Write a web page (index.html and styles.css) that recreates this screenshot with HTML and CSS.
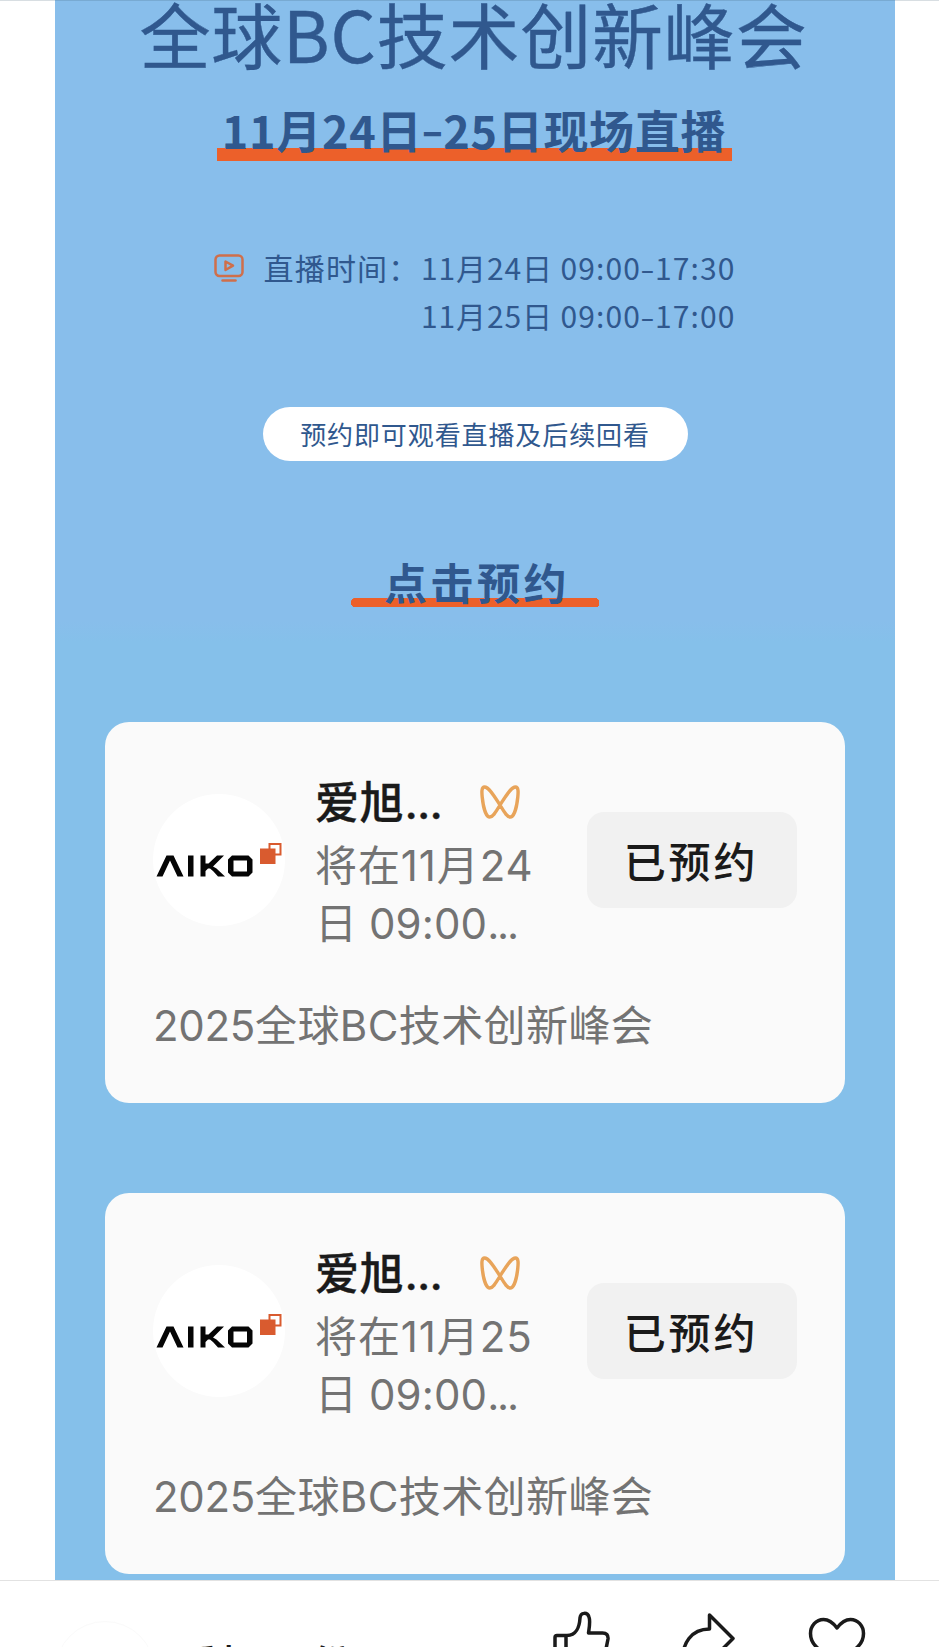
FILE: index.html
```html
<!DOCTYPE html>
<html lang="zh-CN">
<head>
<meta charset="utf-8">
<title>全球BC技术创新峰会</title>
<link rel="stylesheet" href="styles.css">
</head>
<body>
<svg class="defs" width="0" height="0" aria-hidden="true">
  <symbol id="aiko" viewBox="0 0 132 132">
    <g fill="#050505">
      <path d="M3.500 82.500 13.500 61.500H20.500L30.500 82.500H24.500L17 66.500 9.500 82.500Z"/>
      <path d="M35 61.500H40.500V82.500H35Z"/>
      <path d="M47.500 61.500H52.500V69.500H55.500L64 61.500H71L60 72.500 63.500 74.500 72 82.500H65L60 77 57 74.500H55L52.500 77V82.500H47.500Z"/>
      <path fill-rule="evenodd" d="M79 61.500H95.500L99.500 65.500V78.500L95.500 82.500H79L75 78.500V65.500ZM80.500 66.500V77.500H94V66.500Z"/>
    </g>
    <path d="M116.500 50H127.500V60.500H116.500Z" fill="#fff" stroke="#d95b2f" stroke-width="2"/>
    <path d="M107 54.500H122.500V70H107Z" fill="#d95b2f"/>
  </symbol>
  <symbol id="channels" viewBox="0 0 40 34">
    <path d="M20 20C14.500 11.500 9 2 4.500 2C1.500 2 1.700 7 2.200 12C3 20 5.500 32 9.800 32C13 32 15.500 27.500 20 20C25.500 11.500 31 2 35.500 2C38.500 2 38.300 7 37.800 12C37 20 34.500 32 30.200 32C27 32 24.500 27.500 20 20Z" fill="none" stroke="#e8a45a" stroke-width="3.400" stroke-linejoin="round"/>
  </symbol>
</svg>
<div class="screen">
  <main class="poster">
    <h1 class="headline">全球BC技术创新峰会</h1>
    <div class="dates"><span>11月24日<i>–</i>25日现场直播</span></div>
    <section class="schedule">
      <svg class="tv" viewBox="0 0 30 29" fill="none" stroke="#cf6f4b" stroke-width="2.500" stroke-linejoin="round" stroke-linecap="round">
        <rect x="1.500" y="1.500" width="27" height="20.500" rx="4"/>
        <path d="M11.500 7.500V16L19 11.700Z"/><path d="M8.500 26.500H21.500"/>
      </svg>
      <span class="label">直播时间：</span>
      <div class="times"><span>11月24日 <b>09:00<i>–</i>17:30</b></span><span>11月25日 <b>09:00<i>–</i>17:00</b></span></div>
    </section>
    <div class="pill">预约即可观看直播及后续回看</div>
    <h2 class="reserve"><span>点击预约</span></h2>

    <article class="card">
      <div class="row">
        <svg class="avatar"><use href="#aiko"/></svg>
        <div class="info">
          <div class="name"><span>爱旭<i>...</i></span><svg class="channels"><use href="#channels"/></svg></div>
          <div class="desc">将在11月24<br><span class="second">日 09:00<i>...</i></span></div>
        </div>
        <button class="btn">已预约</button>
      </div>
      <div class="event"><b>2025</b>全球BC技术创新峰会</div>
    </article>

    <article class="card">
      <div class="row">
        <svg class="avatar"><use href="#aiko"/></svg>
        <div class="info">
          <div class="name"><span>爱旭<i>...</i></span><svg class="channels"><use href="#channels"/></svg></div>
          <div class="desc">将在11月25<br><span class="second">日 09:00<i>...</i></span></div>
        </div>
        <button class="btn">已预约</button>
      </div>
      <div class="event"><b>2025</b>全球BC技术创新峰会</div>
    </article>
  </main>
  <footer class="bar">
    <div class="account"><span class="ring"></span><span class="who">爱旭股份</span></div>
    <div class="actions">
      <svg viewBox="0 0 60 60"><path d="M16 24.500H6Q4 24.500 4 26.500V50Q4 52 6 52H48Q52 52 53 48L57 28Q57.500 22 51.500 22H37.500C38.500 15 39.500 10 38 6C36.500 1 29.500 1 29 7C28.500 16 25 24.500 16 24.500ZM15 24.500V52"/></svg>
      <svg viewBox="0 0 60 60"><path d="M30.500 4 54 27.500 30.500 51V39C20 38 12 41 4 49C3 33 12 18 30.500 18Z"/></svg>
      <svg viewBox="0 0 60 60"><path d="M30 17C25.500 11 21.500 8.500 16.500 8.500C9 8.500 3.500 15 3.500 22.500C3.500 28 5 31.500 9 35.500L30 56L51 35.500C55 31.500 56.500 28 56.500 22.500C56.500 15 51 8.500 43.500 8.500C38.500 8.500 34.500 11 30 17Z"/></svg>
    </div>
  </footer>
</div>
</body>
</html>
```
FILE: styles.css
```css
* { box-sizing: border-box; }
html, body { margin: 0; height: 100%; overflow: hidden; background: #fff; }
body { font-family: "Noto Sans CJK SC", sans-serif; }
i { font-style: normal; }
.defs { position: absolute; }
.screen { height: 1647px; overflow: hidden; display: flex; flex-direction: column; border-top: 1px solid rgba(60, 90, 110, .2); background: linear-gradient(#88beeb, #88beeb) 55px 0 / 840px 1px no-repeat border-box, #fff; }
.poster { flex: none; width: 840px; height: 1579px; margin-left: 55px; display: flex; flex-direction: column; align-items: center; color: #30588e; background: linear-gradient(#88beeb 0 620px, #85c0ea 640px); overflow: hidden; }
.headline { margin: 0; padding-right: 3px; height: 72px; font-size: 71px; font-weight: 400; line-height: 63px; letter-spacing: .8px; white-space: nowrap; -webkit-text-stroke: .4px #30588e; }
.dates { margin: 31px 2px 0 0; width: 515px; height: 57px; background: linear-gradient(#ec602a, #ec602a) 0 100% / 100% 13.500px no-repeat; font-size: 45px; font-weight: 700; line-height: 51px; letter-spacing: .7px; text-align: center; white-space: nowrap; }
.dates i { display: inline-block; width: 21px; transform: translateY(-2px) scaleX(.85); transform-origin: 0 50%; }
.schedule { margin-top: 84px; width: 521px; display: flex; align-items: flex-start; font-size: 30px; line-height: 47.500px; white-space: nowrap; }
.tv { width: 30px; height: 29px; margin: 9px 0 0 -1px; flex: none; }
.label { margin-left: 20px; width: 158px; font-size: 30px; line-height: 44px; letter-spacing: 1.200px; }
.times { display: flex; flex-direction: column; letter-spacing: .9px; margin-top: -1px; }
.times b { font-weight: 400; letter-spacing: 1.100px; }
.times i { display: inline-block; width: 14px; transform: scaleX(.8); transform-origin: 0 50%; }
.pill { margin-top: 68px; width: 425px; height: 54px; border-radius: 27px; background: #fff; font-size: 26px; line-height: 53px; letter-spacing: .9px; text-align: center; flex: none; }
.reserve { margin: 91px 0 0; padding-left: 4px; width: 248px; height: 55px; font-size: 43px; font-weight: 700; line-height: 58px; letter-spacing: 3.500px; text-align: center; background: radial-gradient(circle at 4.750px 4.750px, #ec602a 4.750px, transparent 5px) 0 100% / 9.500px 9.500px no-repeat, radial-gradient(circle at 4.750px 4.750px, #ec602a 4.750px, transparent 5px) 100% 100% / 9.500px 9.500px no-repeat, linear-gradient(#ec602a, #ec602a) 50% 100% / 238.500px 9.500px no-repeat; flex: none; }
.card { flex: none; width: 740px; height: 381px; border-radius: 24px; background: #fafafa; padding: 50px 48px 0; font-family: Inter, "Noto Sans CJK SC", sans-serif; color: #737373; }
.reserve + .card { margin-top: 115px; }
.card + .card { margin-top: 90px; }
.row { display: flex; height: 176px; align-items: center; }
.avatar { width: 132px; height: 132px; border-radius: 50%; background: #fff; flex: none; }
.info { margin-left: 30px; width: 272px; height: 176px; white-space: nowrap; }
.name { display: flex; align-items: center; height: 62px; font-size: 44px; line-height: 62px; color: #1a1a1a; font-weight: 500; letter-spacing: .8px; -webkit-text-stroke: .4px #1a1a1a; }
.name i { letter-spacing: -.9px; }
.channels { width: 40px; height: 34px; margin: -2px 0 0 38px; }
.desc { padding-top: 3px; font-size: 42px; line-height: 57.500px; letter-spacing: .9px; }
.second { letter-spacing: .1px; }
.second i { letter-spacing: -2.200px; }
.btn { margin: 0; padding: 0 2px 0 0; border: 0; width: 210px; height: 96px; border-radius: 17px; background: #f1f1f1; color: #1a1a1a; font: 500 42px/92px "Noto Sans CJK SC", sans-serif; letter-spacing: 2.800px; }
.event { margin-top: 47px; font-size: 42px; line-height: 62px; letter-spacing: .4px; white-space: nowrap; }
.event b { font-weight: 400; letter-spacing: -.3px; }
.bar { flex: none; height: 67px; border-top: 1px solid #e2e2e2; background: #fff; display: flex; justify-content: space-between; overflow: hidden; }
.account { display: flex; padding: 40px 0 0 55px; }
.ring { width: 100px; height: 100px; border: 1px solid #fafafa; border-radius: 50%; }
.who { margin-left: 20px; padding-top: 12px; font-size: 44px; line-height: 62px; font-weight: 500; color: #1a1a1a; letter-spacing: 1px; }
.actions { display: flex; gap: 68px; padding: 30px 72px 0 0; }
.actions svg { width: 60px; height: 60px; fill: none; stroke: #1a1a1a; stroke-width: 3.500; stroke-linejoin: round; }
```
